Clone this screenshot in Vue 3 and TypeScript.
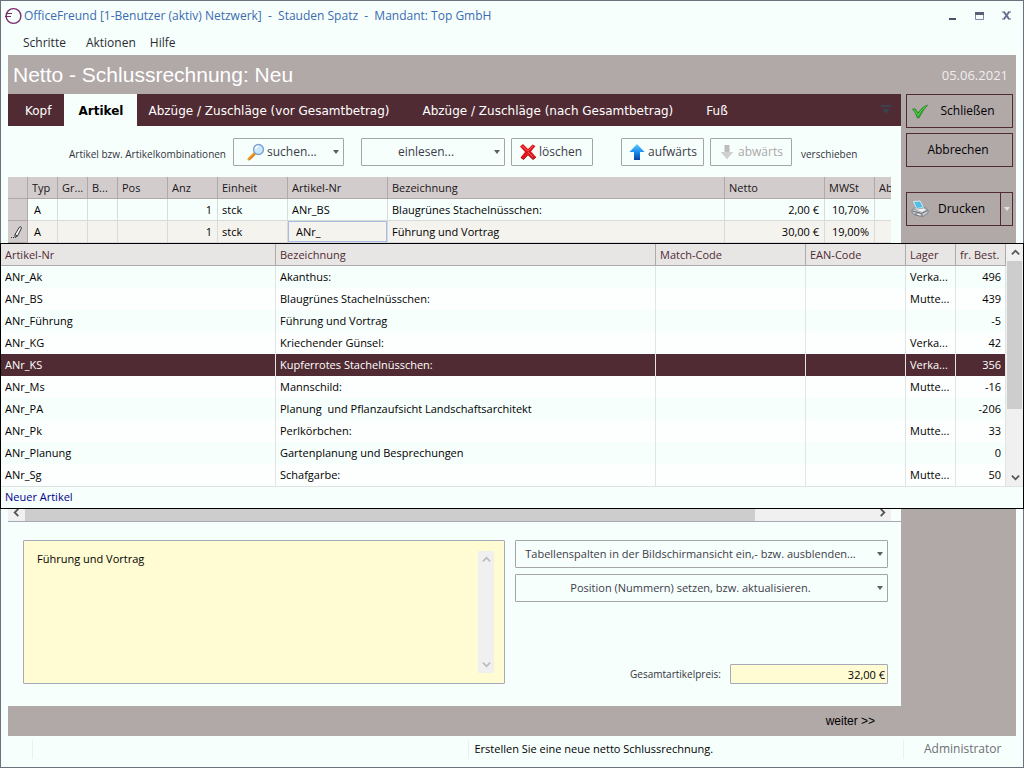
<script setup lang="ts">
import { ref } from 'vue'

interface Position {
  typ: string
  anz: string
  einheit: string
  nr: string
  bezeichnung: string
  netto: string
  mwst: string
  editing?: boolean
}

interface Artikel {
  nr: string
  bezeichnung: string
  lager: string
  bestand: string
}

const menus = ['Schritte', 'Aktionen', 'Hilfe']

const tabs = [
  'Kopf',
  'Artikel',
  'Abzüge / Zuschläge (vor Gesamtbetrag)',
  'Abzüge / Zuschläge (nach Gesamtbetrag)',
  'Fuß',
]
const activeTab = ref('Artikel')

const positionen: Position[] = [
  { typ: 'A', anz: '1', einheit: 'stck', nr: 'ANr_BS', bezeichnung: 'Blaugrünes Stachelnüsschen:', netto: '2,00 €', mwst: '10,70%' },
  { typ: 'A', anz: '1', einheit: 'stck', nr: 'ANr_', bezeichnung: 'Führung und Vortrag', netto: '30,00 €', mwst: '19,00%', editing: true },
]

const artikel: Artikel[] = [
  { nr: 'ANr_Ak', bezeichnung: 'Akanthus:', lager: 'Verka...', bestand: '496' },
  { nr: 'ANr_BS', bezeichnung: 'Blaugrünes Stachelnüsschen:', lager: 'Mutte...', bestand: '439' },
  { nr: 'ANr_Führung', bezeichnung: 'Führung und Vortrag', lager: '', bestand: '-5' },
  { nr: 'ANr_KG', bezeichnung: 'Kriechender Günsel:', lager: 'Verka...', bestand: '42' },
  { nr: 'ANr_KS', bezeichnung: 'Kupferrotes Stachelnüsschen:', lager: 'Verka...', bestand: '356' },
  { nr: 'ANr_Ms', bezeichnung: 'Mannschild:', lager: 'Mutte...', bestand: '-16' },
  { nr: 'ANr_PA', bezeichnung: 'Planung  und Pflanzaufsicht Landschaftsarchitekt', lager: '', bestand: '-206' },
  { nr: 'ANr_Pk', bezeichnung: 'Perlkörbchen:', lager: 'Mutte...', bestand: '33' },
  { nr: 'ANr_Planung', bezeichnung: 'Gartenplanung und Besprechungen', lager: '', bestand: '0' },
  { nr: 'ANr_Sg', bezeichnung: 'Schafgarbe:', lager: 'Mutte...', bestand: '50' },
]
const selected = ref('ANr_KS')

const suchtext = ref('ANr_')
const beschreibung = ref('Führung und Vortrag')
const gesamtpreis = '32,00 €'
</script>

<template>
  <div class="window">
    <header class="titlebar">
      <svg class="logo" viewBox="0 0 18 18" aria-hidden="true">
        <circle cx="9.500" cy="9" r="7.400" fill="none" stroke="#7d2a6c" stroke-width="1.400" />
        <path d="M3 6.500H8M1 9.500H7" fill="none" stroke="#7d2a6c" stroke-width="1.200" />
      </svg>
      <span class="caption">OfficeFreund [1-Benutzer (aktiv) Netzwerk]&nbsp; -&nbsp; Stauden Spatz&nbsp; -&nbsp; Mandant: Top GmbH</span>
      <div class="window-buttons">
        <button type="button" aria-label="Minimieren">
          <svg viewBox="0 0 12 12"><path d="M2 8h7v2H2z" fill="#4d5068" /></svg>
        </button>
        <button type="button" aria-label="Maximieren">
          <svg viewBox="0 0 12 12"><path d="M1.500 4h8v5.500h-8z" fill="none" stroke="#7c88a8" /><path d="M1 2h9v3H1z" fill="#5a6078" /></svg>
        </button>
        <button type="button" aria-label="Fenster schließen">
          <svg viewBox="0 0 12 12"><path d="M3 2l5 7M8 2L3 9" stroke="#64708f" stroke-width="2" /><path d="M1 2h3M7 2h3M1 9h3M7 9h3" stroke="#5c6784" /></svg>
        </button>
      </div>
    </header>

    <nav class="menubar">
      <button v-for="m in menus" :key="m" type="button">{{ m }}</button>
    </nav>

    <div class="body">
      <div class="heading">
        <h1>Netto - Schlussrechnung: Neu</h1>
        <span class="date">05.06.2021</span>
      </div>

      <div class="columns">
        <main class="panel">
          <div class="tabs" role="tablist">
            <button
              v-for="t in tabs"
              :key="t"
              type="button"
              role="tab"
              :aria-selected="t === activeTab"
              :class="{ active: t === activeTab }"
              @click="activeTab = t"
            >{{ t }}</button>
            <svg class="tab-more" viewBox="0 0 10 10" aria-hidden="true"><path d="M0 0h10v2H0zM1 4h8L5 9z" fill="#3a4250" /></svg>
          </div>

          <div class="toolbar">
            <span class="hint first">Artikel bzw. Artikelkombinationen</span>
            <button type="button" class="btn search">
              <svg class="ico" viewBox="0 0 18 18" aria-hidden="true">
                <path d="M7.500 10.500L2 16" stroke="#f09a1e" stroke-width="3" stroke-linecap="round" />
                <path d="M8 11.500L3 16.500" stroke="#a8672a" stroke-width="1" />
                <circle cx="11.500" cy="6.500" r="5" fill="#c9e8fd" stroke="#7d9fd0" stroke-width="1.300" />
                <path d="M8.500 6q.5-2.500 3-2.800" stroke="#fff" stroke-width="1.500" fill="none" />
              </svg>
              <span>suchen...</span><i class="caret"></i>
            </button>
            <button type="button" class="btn read"><span>einlesen...</span><i class="caret"></i></button>
            <button type="button" class="btn delete">
              <svg class="ico" viewBox="0 0 18 18" aria-hidden="true">
                <path d="M1 3.500L4 1l5 5 4.500-4.500L16.500 3 12 8.500l5 5.500-3 2.500-5-5L4.500 16.500 1.500 14.500 6 9z" fill="#e0161b" />
                <path d="M3 3l6 5 5-5M9 9l5 5" stroke="#f4595a" fill="none" />
                <path d="M2 14.500l2.500 2L9 11.800l5 4.700 3-2.500" stroke="#a80c10" fill="none" />
              </svg>
              <span>löschen</span>
            </button>
            <button type="button" class="btn up">
              <svg class="ico" viewBox="0 0 18 18" aria-hidden="true">
                <defs><linearGradient id="blau" x1="0" y1="0" x2="0" y2="1"><stop offset="0" stop-color="#5ecbff" /><stop offset=".55" stop-color="#1487ee" /><stop offset="1" stop-color="#0b3da0" /></linearGradient></defs>
                <path d="M9 1l7.500 8H12v8H6V9H1.500z" fill="url(#blau)" />
              </svg>
              <span>aufwärts</span>
            </button>
            <button type="button" class="btn down" disabled>
              <svg class="ico" viewBox="0 0 18 18" aria-hidden="true">
                <path d="M6.500 2h5v7H15l-6 7-6-7h3.500z" fill="#bcbcbc" />
                <path d="M3 9h12l-6 7z" fill="#d0d0d0" />
              </svg>
              <span>abwärts</span>
            </button>
            <span class="hint">verschieben</span>
          </div>

          <div class="grid">
            <table class="positions">
              <colgroup>
                <col class="w20" /><col class="w30" /><col class="w30" /><col class="w30" /><col class="w50" /><col class="w50" />
                <col class="w70" /><col class="w100" /><col /><col class="w100" /><col class="w50" /><col class="w16" />
              </colgroup>
              <thead>
                <tr>
                  <th></th><th>Typ</th><th>Gr...</th><th>B...</th><th>Pos</th><th>Anz</th><th>Einheit</th>
                  <th>Artikel-Nr</th><th>Bezeichnung</th><th>Netto</th><th>MWSt</th><th>Ab</th>
                </tr>
              </thead>
              <tbody>
                <tr v-for="p in positionen" :key="p.nr" :class="{ current: p.editing }">
                  <td class="marker">
                    <svg v-if="p.editing" viewBox="0 0 12 14" aria-hidden="true">
                      <path d="M4 9.500L8.500 2q1.500-1 2 1L6.500 11 4 12.500zM4 9.500l2.500 1.500" fill="#fff" stroke="#333" />
                      <path d="M0 12.500h1M2 12.500h1" stroke="#333" />
                    </svg>
                  </td>
                  <td class="typ">{{ p.typ }}</td>
                  <td></td><td></td><td></td>
                  <td class="num">{{ p.anz }}</td>
                  <td>{{ p.einheit }}</td>
                  <td v-if="p.editing" class="edit"><input v-model="suchtext" type="text" aria-label="Artikel-Nr" /></td>
                  <td v-else>{{ p.nr }}</td>
                  <td>{{ p.bezeichnung }}</td>
                  <td class="num">{{ p.netto }}</td>
                  <td class="num">{{ p.mwst }}</td>
                  <td></td>
                </tr>
              </tbody>
            </table>
            <div class="hscroll">
              <button type="button" aria-label="Nach links">
                <svg viewBox="0 0 10 10"><path d="M7 1L3 5l4 4" fill="none" stroke="#555" stroke-width="2" /></svg>
              </button>
              <div class="htrack"><div class="hthumb"></div></div>
              <button type="button" aria-label="Nach rechts">
                <svg viewBox="0 0 10 10"><path d="M3 1l4 4-4 4" fill="none" stroke="#555" stroke-width="2" /></svg>
              </button>
            </div>
          </div>

          <div class="details">
            <div class="memo">
              <textarea v-model="beschreibung" aria-label="Beschreibung"></textarea>
              <div class="memo-scroll">
                <svg viewBox="0 0 10 10"><path d="M1 7l4-4 4 4" fill="none" stroke="#bdbdbd" stroke-width="2" /></svg>
                <svg viewBox="0 0 10 10"><path d="M1 3l4 4 4-4" fill="none" stroke="#bdbdbd" stroke-width="2" /></svg>
              </div>
            </div>
            <div class="side">
              <button type="button" class="btn wide"><span>Tabellenspalten in der Bildschirmansicht ein,- bzw. ausblenden...</span><i class="caret"></i></button>
              <button type="button" class="btn wide"><span>Position (Nummern) setzen, bzw. aktualisieren.</span><i class="caret"></i></button>
              <div class="total">
                <label for="gesamt">Gesamtartikelpreis:</label>
                <input id="gesamt" type="text" :value="gesamtpreis" readonly />
              </div>
            </div>
          </div>
        </main>

        <aside class="actions">
          <button type="button" class="action">
            <svg class="act-ico" viewBox="0 0 18 18" aria-hidden="true">
              <path d="M1.500 7q2-.5 3 0l2.500 4Q11 4.500 16.500 3 11.500 8.500 8 16H6.500Q4.500 10.500 1.500 7z" fill="#2fa827" stroke="#1d7f1c" stroke-width=".7" />
              <path d="M3 7.500l4 6Q10 7.500 14.500 4.500" fill="none" stroke="#6fd45f" stroke-width=".8" />
            </svg>
            <span>Schließen</span>
          </button>
          <button type="button" class="action plain"><span>Abbrechen</span></button>
          <div class="split">
            <button type="button" class="action print">
              <svg class="act-ico" viewBox="0 0 18 18" aria-hidden="true">
                <path d="M1 10l4-3h8l4 3v3l-5 3.500-8-1.500-3-2.500z" fill="#c9ced2" stroke="#70767c" stroke-width=".8" />
                <path d="M2.500 1.500l6.500-.5 3.500 6.500-7 1z" fill="#4fbfe8" stroke="#e9f6fb" stroke-width=".8" />
                <path d="M3.500 9.500l9.500-1.500 3 2-5 2.500z" fill="#eef1f3" stroke="#868c92" stroke-width=".6" />
                <path d="M1.500 11l9 2.500 6-3" fill="none" stroke="#5c6268" stroke-width=".9" />
                <path d="M4 14l5 2 3-1-5-2z" fill="#fff" stroke="#5a6066" stroke-width=".6" />
              </svg>
              <span>Drucken</span>
            </button>
            <button type="button" class="action more" aria-label="Druckoptionen"><i class="caret light"></i></button>
          </div>
        </aside>
      </div>

      <div class="next"><button type="button">weiter &gt;&gt;</button></div>
    </div>

    <footer class="status">
      <span class="cell small"></span>
      <span class="cell mid"></span>
      <span class="cell message">Erstellen Sie eine neue netto Schlussrechnung.</span>
      <span class="cell user">Administrator</span>
    </footer>

    <section class="lookup" aria-label="Artikelauswahl">
      <div class="lookup-main">
        <table class="articles">
          <colgroup><col class="w275" /><col /><col class="w150" /><col class="w100" /><col class="w50" /><col class="w50" /></colgroup>
          <thead>
            <tr><th>Artikel-Nr</th><th>Bezeichnung</th><th>Match-Code</th><th>EAN-Code</th><th>Lager</th><th>fr. Best.</th></tr>
          </thead>
          <tbody>
            <tr v-for="a in artikel" :key="a.nr" :class="{ selected: a.nr === selected }" @click="selected = a.nr">
              <td>{{ a.nr }}</td><td>{{ a.bezeichnung }}</td><td></td><td></td><td>{{ a.lager }}</td><td class="num">{{ a.bestand }}</td>
            </tr>
          </tbody>
        </table>
        <div class="vscroll">
          <button type="button" aria-label="Nach oben">
            <svg viewBox="0 0 10 10"><path d="M1 7l4-4 4 4" fill="none" stroke="#555" stroke-width="2" /></svg>
          </button>
          <div class="vtrack"><div class="vthumb"></div></div>
          <button type="button" aria-label="Nach unten">
            <svg viewBox="0 0 10 10"><path d="M1 3l4 4 4-4" fill="none" stroke="#555" stroke-width="2" /></svg>
          </button>
        </div>
      </div>
      <a class="new-article" href="#">Neuer Artikel</a>
    </section>
  </div>
</template>

<style>
html, body { margin: 0; height: 100%; }
#app { height: 100%; }
</style>

<style scoped>
* { box-sizing: border-box; }
.window {
  position: relative;
  display: flex;
  flex-direction: column;
  min-height: 100%;
  border: 1px solid #6e707f;
  background: #f7fffd;
  color: #000;
  font-family: "Open Sans", "Noto Sans", sans-serif;
  font-size: 11px;
  line-height: 16px;
}
button, input, textarea { font: inherit; color: inherit; margin: 0; padding: 0; border: 0; background: none; border-radius: 0; }
button { cursor: pointer; white-space: nowrap; }

.titlebar { display: flex; align-items: center; height: 29px; padding: 0 10px 0 3px; }
.logo { width: 18px; height: 18px; }
.caption { flex: 1; margin-left: 2px; font-size: 12px; color: #3b6bb0; white-space: nowrap; }
.window-buttons { display: flex; gap: 15px; }
.window-buttons button { display: flex; width: 12px; height: 12px; }
.window-buttons svg { width: 12px; height: 12px; }

.menubar { display: flex; gap: 14px; height: 25px; padding-left: 22px; color: #2b2b33; font-size: 12px; }
.menubar button:first-child { margin-right: 6px; }

.body { flex: 1; display: flex; flex-direction: column; margin: 0 7px; background: #b1a8a8; }
.heading { display: flex; align-items: center; justify-content: space-between; height: 39px; padding: 0 8px 0 5px; color: #fff; }
.heading h1 { margin: 0; font: 400 21px/28px "Liberation Sans", Arial, sans-serif; }
.date { font-size: 13px; color: #f1eeee; }

.columns { flex: 1; display: flex; }
.panel { flex: 1; min-width: 0; display: flex; flex-direction: column; background: #f7fffd; }
.tabs { display: flex; height: 32px; background: #512b33; color: #fff; font: 12px/16px "DejaVu Sans", Verdana, sans-serif; }
.tabs button { padding: 2px 22px 0 11px; }
.tabs button:first-child { padding: 2px 13px 0 17px; }
.tabs button.active { padding: 2px 14px 0; background: #f7fffd; color: #000; font-weight: 700; }
.tab-more { width: 10px; height: 10px; margin: 11px 10px 0 auto; }

.toolbar { display: flex; align-items: center; height: 51px; padding-left: 61px; white-space: nowrap; }
.hint, .total label { color: #33333b; font-size: 10px; }
.hint { padding-top: 4px; }
.hint.first { width: 164px; }
.btn { display: flex; align-items: center; height: 28px; border: 1px solid #a5a5a8; border-radius: 1px; color: #3c3c48; font-size: 12px; }
.ico { flex: none; width: 18px; height: 18px; }
.btn span { flex: 1; text-align: center; }
.caret { flex: none; width: 0; height: 0; border: 3px solid transparent; border-top: 4px solid #5a5f68; border-bottom: 0; }
.caret.light { border-top-color: #e6e2e2; }
.search { width: 111px; padding: 0 4px 0 13px; }
.search span { text-align: left; padding-left: 2px; }
.read { width: 144px; margin: 0 6px 0 17px; padding: 0 4px; }
.read span { padding-right: 8px; }
.delete { width: 82px; margin-right: 28px; padding: 0 7px; }
.up { width: 83px; margin-right: 6px; padding: 0 6px; }
.down { width: 82px; margin-right: 9px; padding: 0 7px; color: #a7a7aa; }
.delete span, .up span, .down span { text-align: left; padding-left: 2px; }

.grid { display: flex; flex-direction: column; height: 345px; border-bottom: 1px solid #a5a9b8; }
table { border-collapse: separate; border-spacing: 0; table-layout: fixed; }
.positions { width: calc(100% - 10px); }
.w16 { width: 16px; } .w20 { width: 20px; } .w30 { width: 30px; } .w50 { width: 50px; } .w70 { width: 70px; }
.w100 { width: 100px; } .w150 { width: 150px; } .w275 { width: 275px; }
th, td { height: 22px; padding: 0 4px; overflow: hidden; text-align: left; font-weight: 400; white-space: pre; line-height: 21px; }
.positions th { background: #d2cdcc; border-right: 1px solid #b1a8a8; border-bottom: 1px solid #b1a8a8; color: #1c1419; }
.positions td { border-right: 1px solid #d9dadb; border-bottom: 1px solid #d9dadb; }
.positions th:last-child, .positions td:last-child { border-right: 0; }
.positions .current td { background: #f5f3ee; }
.positions td.typ { padding-left: 6px; }
.positions td.marker, .positions .current td.marker { padding: 0 2px; background: #d2cdcc; border-color: #b1a8a8; }
.marker svg { display: block; width: 14px; height: 14px; }
.positions td.edit { padding: 0; }
.edit input { display: block; width: 100%; height: 21px; padding-left: 7px; border: 1px solid #a9bcdf; }
td.num { text-align: right; }
.positions td.num { padding-right: 5px; }

.hscroll { display: flex; height: 17px; margin: auto 10px 0 0; background: #f0f0f0; }
.hscroll button, .vscroll button { display: flex; align-items: center; justify-content: center; flex: none; width: 17px; height: 17px; }
.hscroll svg, .vscroll svg, .memo-scroll svg { width: 9px; height: 9px; }
.htrack { flex: 1; }
.hthumb { width: 86%; height: 17px; background: #cdcdcd; }

.details { flex: 1; display: grid; grid-template-columns: 482fr 373fr; gap: 10px; padding: 18px 13px 22px 15px; }
.memo { display: flex; min-width: 0; padding: 10px; border: 1px solid #a5a9b8; border-radius: 1px; background: #fffbd2; }
.memo textarea { flex: 1; min-width: 0; padding-left: 3px; resize: none; outline: 0; }
.memo-scroll { display: flex; flex-direction: column; justify-content: space-between; align-items: center; width: 16px; padding: 4px 0; background: #f0f0f0; }
.side { display: flex; flex-direction: column; gap: 6px; min-width: 0; }
.wide { padding: 0 4px; font-size: 11px; }
.wide span { padding-right: 16px; }
.total { display: flex; align-items: center; justify-content: flex-end; gap: 9px; margin-top: auto; }
.total input { width: 158px; height: 20px; padding-right: 2px; border: 1px solid #a5a9b8; border-radius: 1px; background: #fffbd2; color: #000; text-align: right; }

.actions { width: 115px; padding: 0 3px 0 5px; }
.action { display: flex; align-items: center; width: 100%; height: 34px; border: 1px solid #512b33; font-size: 12px; }
.action + .action { margin-top: 5px; }
.action span { flex: 1; padding-right: 6px; text-align: center; }
.act-ico { flex: none; width: 18px; height: 18px; margin-left: 4px; }
.plain span { padding-right: 3px; }
.split { display: flex; margin-top: 25px; }
.split .action { margin: 0; }
.split .print { flex: 1; }
.split .more { width: 13px; margin-left: -1px; justify-content: center; }

.next { display: flex; align-items: center; justify-content: flex-end; height: 30px; padding-right: 141px; font: 12px/16px "Liberation Sans", Arial, sans-serif; }
.status { display: flex; align-items: center; height: 31px; padding: 0 0 4px 7px; }
.cell { height: 19px; line-height: 18px; }
.small { width: 25px; border-right: 1px solid #eceff0; }
.mid { flex: 437; border-right: 1px solid #eceff0; }
.message { flex: 430; padding-left: 5px; border-right: 1px solid #eceff0; white-space: nowrap; }
.user { width: 119px; padding-left: 20px; color: #6e6e74; font-size: 12px; }

/* Article picker dropped down over the form */
.lookup { position: absolute; top: 242px; left: -1px; right: -1px; border: 1px solid #000; background: #f7fffd; }
.lookup-main { display: flex; border-bottom: 1px solid #dfe2e2; }
.articles { flex: 1; width: 0; min-width: 0; }
.articles th { background: #e8e6e4; border-right: 1px solid #adabaa; border-bottom: 1px solid #adabaa; color: #512b33; }
.articles td { border-right: 1px solid #e2e4e4; line-height: 22px; }
.articles tbody tr:nth-child(even) { background: #fdfffe; }
.articles tbody tr.selected { background: #512b33; color: #fff; }
.vscroll { display: flex; flex-direction: column; width: 17px; padding-left: 1px; background: #f0f0f0; }
.vtrack { flex: 1; }
.vthumb { height: 71%; width: 15px; background: #cdcdcd; }
.new-article { display: block; height: 21px; padding-left: 4px; line-height: 20px; color: #00008b; text-decoration: none; }
</style>
